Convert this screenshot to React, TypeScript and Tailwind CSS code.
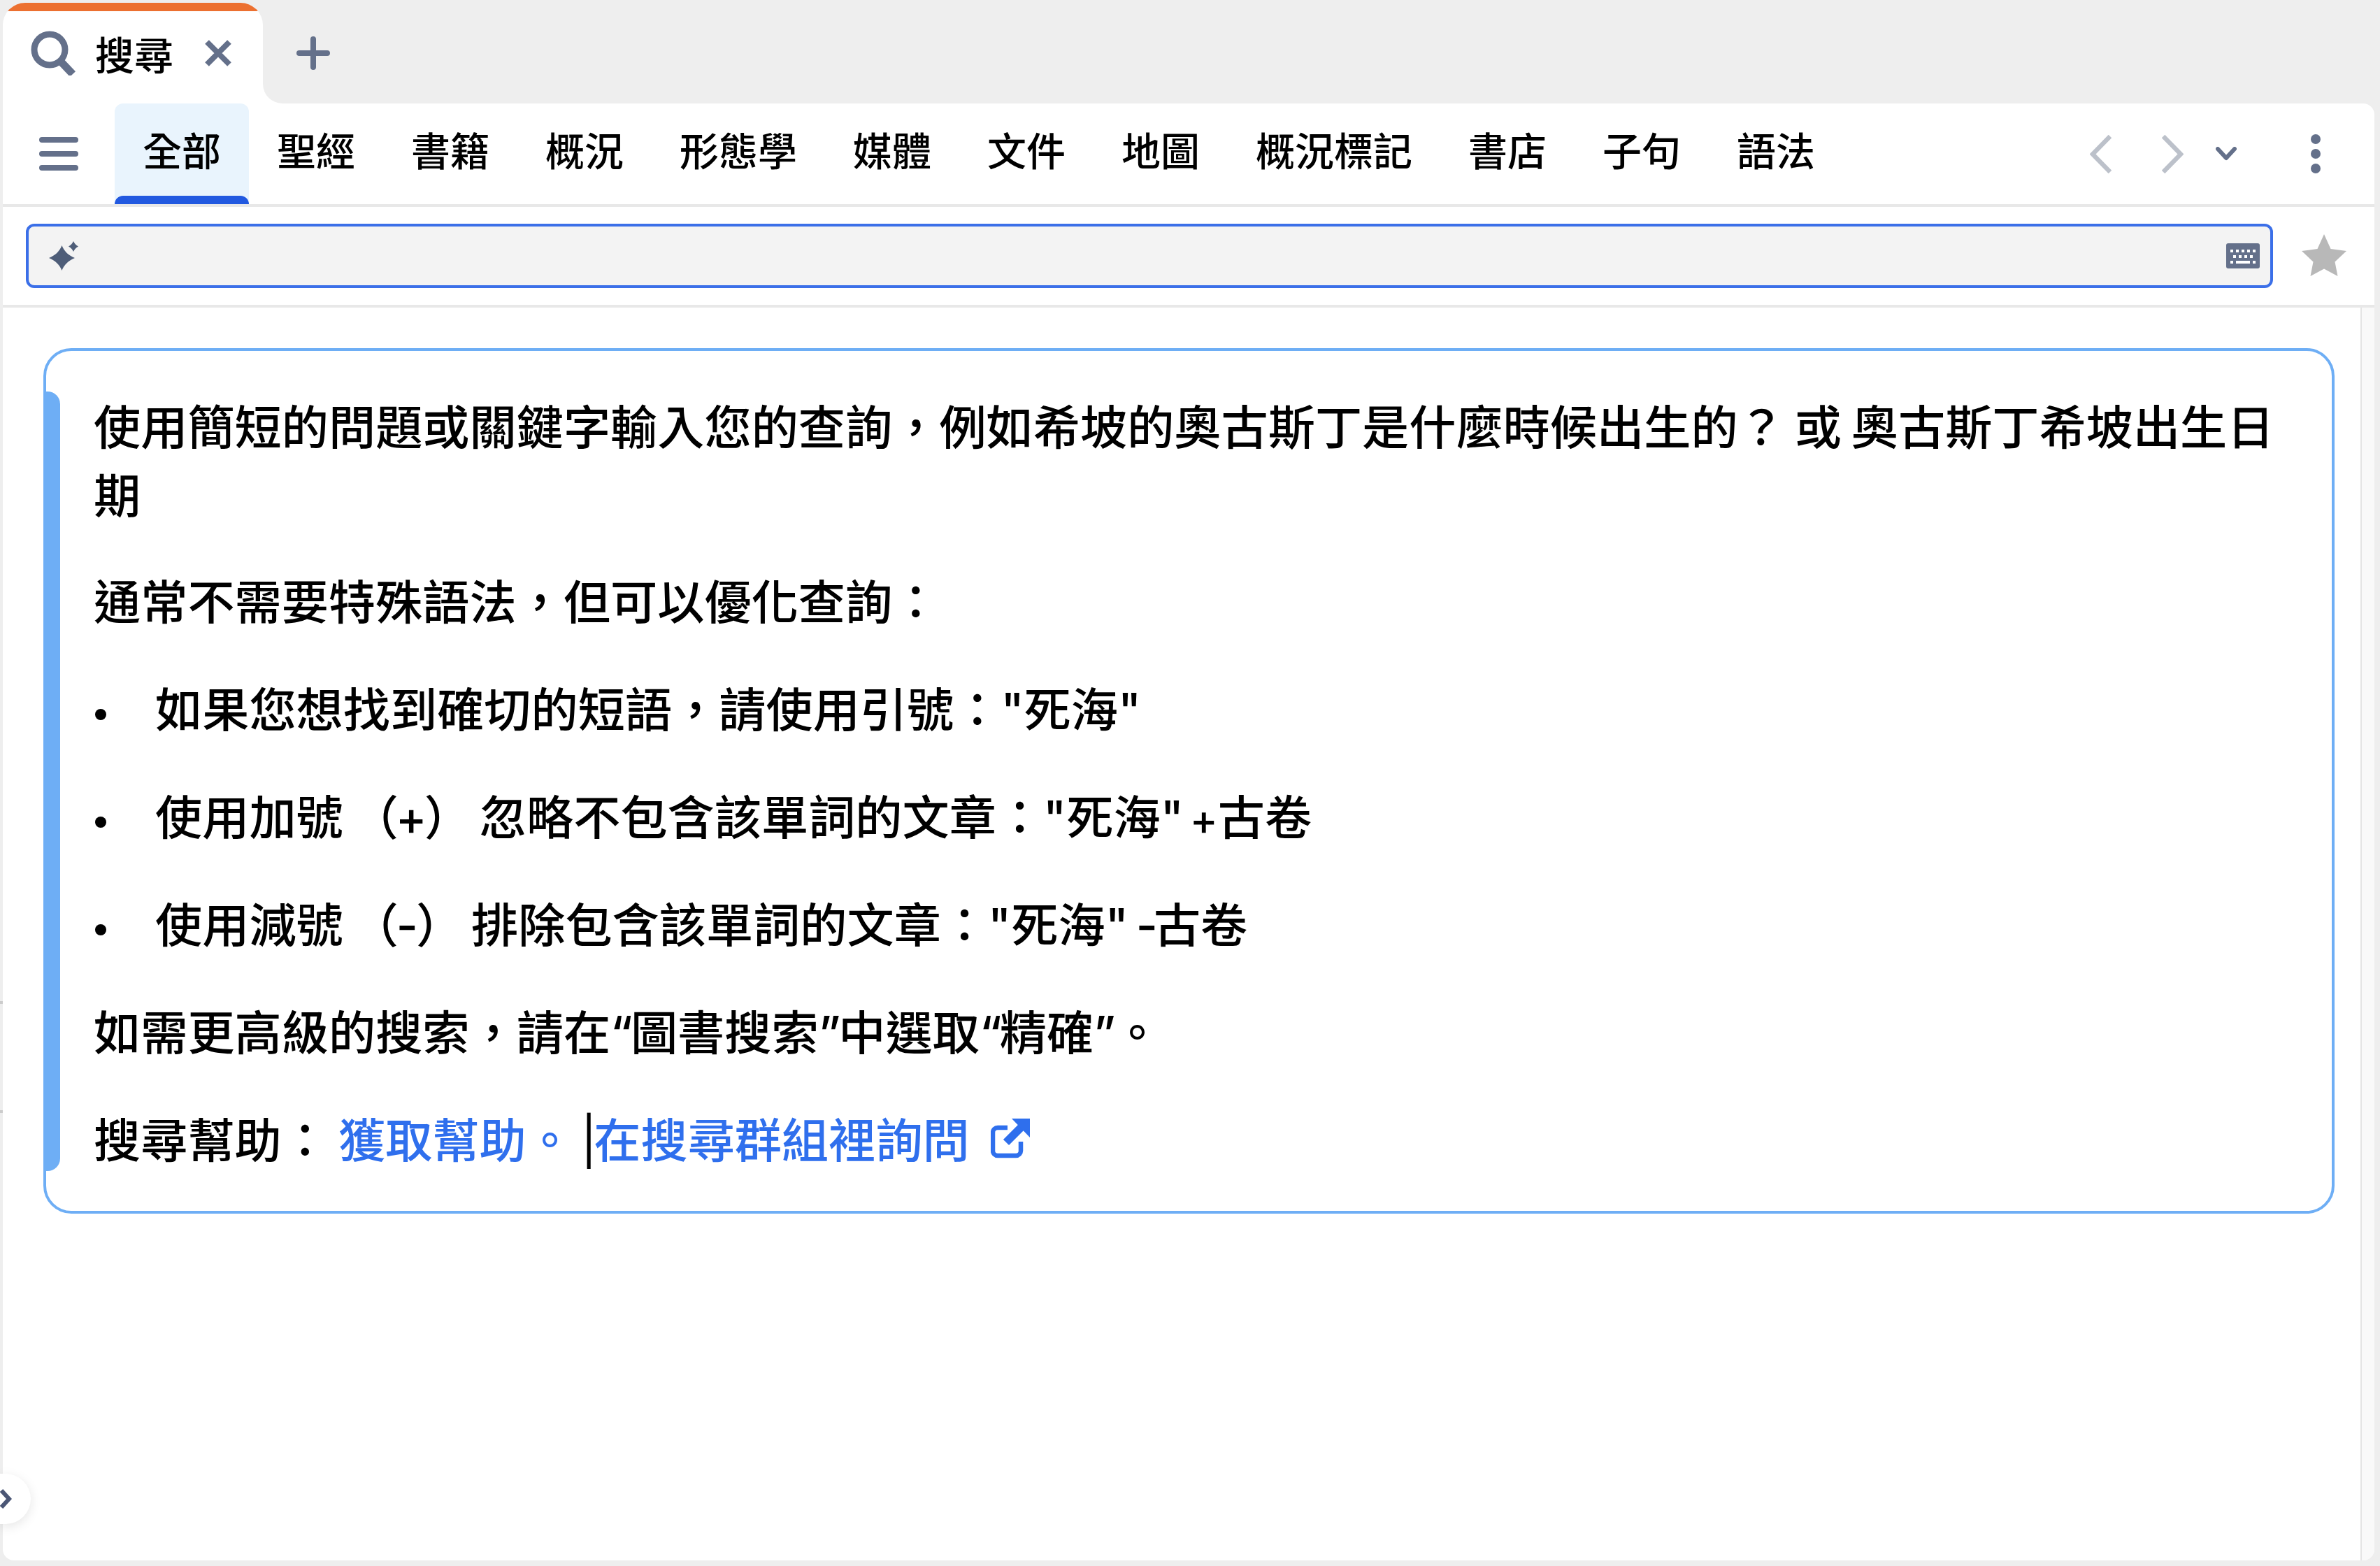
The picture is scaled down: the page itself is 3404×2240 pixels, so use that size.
const tabs = ["全部", "聖經", "書籍", "概況", "形態學", "媒體", "文件", "地圖", "概況標記", "書店", "子句", "語法"];

function Dot() {
  return <span className="mt-[12px] h-[16px] w-[16px] shrink-0 rounded-full bg-black" />;
}

function Bullet({ children }: { children: React.ReactNode }) {
  return (
    <li className="mb-[56px] flex items-center pl-[2px]">
      <Dot />
      <span className="ml-[70px] [word-spacing:-6px]">{children}</span>
    </li>
  );
}

function Quote({ children }: { children: React.ReactNode }) {
  return <span className="tracking-[-3px]">{children}</span>;
}

function ExternalIcon() {
  return (
    <svg viewBox="0 0 58 58" className="ml-[30px] inline-block h-[58px] w-[58px] align-[-2px]" fill="none">
      <path d="M24 13H10a7 7 0 0 0-7 7v26a7 7 0 0 0 7 7h26a7 7 0 0 0 7-7V33" stroke="#2f6fed" strokeWidth="6.5" />
      <path d="M22 34 44 12" stroke="#2f6fed" strokeWidth="11.5" />
      <path d="M30 0h26v27z" fill="#2f6fed" />
    </svg>
  );
}

export default function App() {
  return (
    <div className="relative flex h-[2240px] w-[3404px] flex-col overflow-hidden bg-[#eeeeee] pb-[8px] pl-[4px] pr-[8px] pt-[4px] font-['Inter','Noto_Sans_CJK_TC',sans-serif] font-medium text-black">
      {/* tab strip */}
      <div className="flex h-[144px] shrink-0">
        <div className="flex w-[372px] flex-col overflow-hidden rounded-t-[32px] bg-white">
          <div className="h-[12px] bg-[#ec7030]" />
          <div className="flex flex-1 items-start pt-[28px]">
            <svg viewBox="0 0 64 64" className="ml-[40px] h-[64px] w-[64px]" fill="none" stroke="#64708a">
              <circle cx="27" cy="27" r="22" strokeWidth="9" />
              <path d="M42 43 60 62" strokeWidth="11" />
            </svg>
            <span className="ml-[28px] text-[56px] leading-[72px]">搜尋</span>
            <svg viewBox="0 0 38 38" className="ml-[45px] mt-[13px] h-[38px] w-[38px]" stroke="#64708a" strokeWidth="8">
              <path d="M3 3 35 35M35 3 3 35" />
            </svg>
          </div>
        </div>
        <div className="h-full w-[32px] bg-white">
          <div className="h-full rounded-bl-[28px] bg-[#eeeeee]" />
        </div>
        <svg viewBox="0 0 48 48" className="ml-[16px] mt-[48px] h-[48px] w-[48px]" stroke="#64708a" strokeWidth="8" strokeLinecap="round">
          <path d="M24 4V44M4 24H44" />
        </svg>
      </div>

      {/* panel */}
      <div className="relative flex min-h-0 flex-1 flex-col rounded-b-[16px] rounded-tr-[16px] bg-white">
        <div className="flex h-[148px] shrink-0 border-b-[4px] border-[#e8e8e8]">
          <div className="ml-[52px] mr-[52px] flex w-[56px] flex-col gap-[12px] pt-[48px]">
            <div className="h-[8px] rounded-[4px] bg-[#64708a]" />
            <div className="h-[8px] rounded-[4px] bg-[#64708a]" />
            <div className="h-[8px] rounded-[4px] bg-[#64708a]" />
          </div>
          {tabs.map((t, i) => (
            <div key={t} className={`relative px-[40px] pt-[33px] text-[56px] leading-[72px] ${i === 0 ? "rounded-t-[12px] bg-[#e9f4fd]" : ""}`}>
              {t}
              {i === 0 && <div className="absolute bottom-0 left-0 h-[12px] w-full rounded-t-[12px] bg-[#2259e0]" />}
            </div>
          ))}
          <div className="ml-auto flex items-center pr-[77px]">
            <svg viewBox="0 0 31 55" className="h-[55px] w-[31px]" fill="none" stroke="#bcc1ca" strokeWidth="6.5">
              <path d="M29 2 4 27.500 29 53" />
            </svg>
            <svg viewBox="0 0 31 55" className="ml-[72px] h-[55px] w-[31px]" fill="none" stroke="#bcc1ca" strokeWidth="6.5">
              <path d="M2 2 27 27.500 2 53" />
            </svg>
            <svg viewBox="0 0 30 20" className="ml-[46px] h-[20px] w-[30px]" fill="none" stroke="#64708a" strokeWidth="6" strokeLinecap="round" strokeLinejoin="round">
              <path d="M3 3 15 16 27 3" />
            </svg>
            <div className="ml-[106px] flex w-[14px] flex-col gap-[7px]">
              <div className="h-[14px] rounded-full bg-[#64708a]" />
              <div className="h-[14px] rounded-full bg-[#64708a]" />
              <div className="h-[14px] rounded-full bg-[#64708a]" />
            </div>
          </div>
        </div>

        <div className="flex h-[144px] shrink-0 items-center border-b-[4px] border-[#e8e8e8]">
          <div className="ml-[33px] flex h-[92px] w-[3214px] items-center rounded-[12px] border-[4px] border-[#3b6fe8] bg-[#f3f3f3]">
            <svg viewBox="0 0 42 42" className="ml-[29px] h-[42px] w-[42px]" fill="#4e5d78">
              <path d="M18.500 6C22 15 28 20 37 24 28 28 22 33 18.500 42 15 33 9 28 0 24 9 20 15 15 18.500 6Z" />
              <path d="M35 0C36.500 3.500 38.500 5.500 42 7.500 38.500 9.500 36.500 11.500 35 15 33.500 11.500 31.500 9.500 28 7.500 31.500 5.500 33.500 3.500 35 0Z" />
            </svg>
            <svg viewBox="0 0 48 36" className="ml-auto mr-[15px] h-[36px] w-[48px]">
              <rect width="48" height="36" rx="3" fill="#64708a" />
              <g fill="#ffffff">
                <rect x="6" y="9" width="4" height="4" />
                <rect x="14" y="9" width="4" height="4" />
                <rect x="22" y="9" width="4" height="4" />
                <rect x="30" y="9" width="4" height="4" />
                <rect x="38" y="9" width="4" height="4" />
                <rect x="10" y="17" width="4" height="4" />
                <rect x="18" y="17" width="4" height="4" />
                <rect x="26" y="17" width="4" height="4" />
                <rect x="34" y="17" width="4" height="4" />
                <rect x="6" y="25" width="4" height="4" />
                <rect x="14" y="25" width="20" height="4" />
                <rect x="38" y="25" width="4" height="4" />
              </g>
            </svg>
          </div>
          <svg viewBox="0 0 64 60" className="ml-[41px] -mt-[2px] h-[60px] w-[64px]" fill="#b8b8b8">
            <path d="M32 0 41.500 21 64 24 47.500 39.500 51.500 60 32 49.500 12.500 60 16.500 39.500 0 24 22.500 21Z" />
          </svg>
        </div>

        <div className="flex min-h-0 flex-1">
          <div className="flex-1 pl-[58px] pr-[37px] pt-[58px]">
            <div className="relative rounded-[40px] border-[4px] border-[#6eaef5] pb-[51px] pl-[68px] pr-[60px] pt-[61px] text-[67.200px] leading-[98px]">
              <div className="absolute -left-[4px] bottom-[57px] top-[58px] w-[24px] rounded-r-[18px] bg-[#6eaef5]" />
              <p className="mb-[54px] [word-spacing:-4px]">使用簡短的問題或關鍵字輸入您的查詢，例如希坡的奧古斯丁是什麼時候出生的？ 或 奧古斯丁希坡出生日期</p>
              <p className="mb-[56px]">通常不需要特殊語法，但可以優化查詢：</p>
              <ul>
                <Bullet>如果您想找到確切的短語，請使用引號："死海"</Bullet>
                <Bullet>
                  使用加號 （<span className="mx-[-4px]">+</span>） 忽略不包含該單詞的文章："死海" <span className="-ml-[3px] text-[60px] leading-none">+</span>古卷
                </Bullet>
                <Bullet>
                  使用減號 （<span className="mx-[-3px]">-</span>） 排除包含該單詞的文章："死海" <span className="-ml-[1px] -mr-[6px]">-</span>古卷
                </Bullet>
              </ul>
              <p className="mb-[56px]">
                如需更高級的搜索，請在<Quote>“</Quote>圖書搜索<Quote>”</Quote>中選取<Quote>“</Quote>精確<Quote>”</Quote>。
              </p>
              <p>
                搜尋幫助：<span className="ml-[14px] text-[#2f6fed]">獲取幫助。</span>
                <span className="ml-[11px] font-normal">|</span>
                <span className="-ml-[4px] text-[#2f6fed]">在搜尋群組裡詢問</span>
                <ExternalIcon />
              </p>
            </div>
          </div>
          <div className="w-[20px] rounded-br-[16px] border-l-[2px] border-[#e4e4e4] bg-[#f9f9f9]" />
        </div>

        <div className="absolute -left-[4px] bottom-[52px] flex h-[72px] w-[44px] items-center rounded-r-[36px] bg-white shadow-[0_4px_16px_rgba(0,0,0,0.1)]">
          <svg viewBox="0 0 17 28" className="h-[28px] w-[17px]" fill="none" stroke="#4b5675" strokeWidth="6">
            <path d="M2 2 13 14 2 26" />
          </svg>
        </div>
      </div>

      <div className="absolute left-0 top-[1432px] h-[4px] w-[4px] bg-[#cccccc]" />
      <div className="absolute left-0 top-[1588px] h-[4px] w-[4px] bg-[#cccccc]" />
    </div>
  );
}
